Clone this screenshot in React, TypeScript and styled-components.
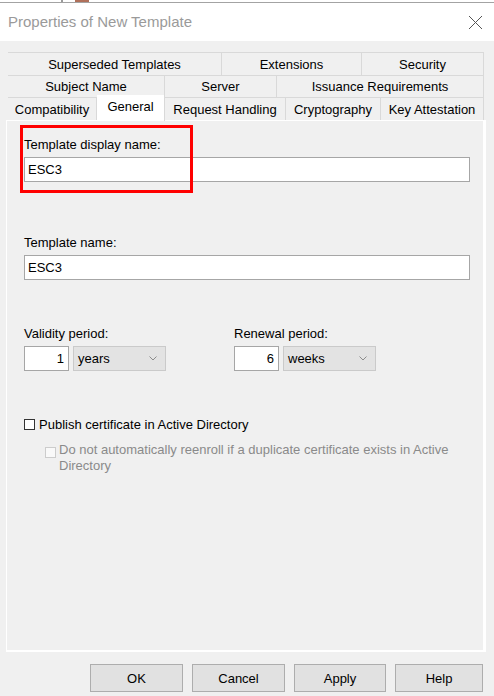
import React from "react";
import styled, { createGlobalStyle, css } from "styled-components";

const GlobalStyle = createGlobalStyle`
	html, body {
		margin: 0;
		padding: 0;
		background: #ffffff;
		overflow: hidden;
	}
`;

const FONT = `"Liberation Sans", Arial, sans-serif`;

const Window = styled.div`
	width: 494px;
	height: 696px;
	display: flex;
	flex-direction: column;
	background: #f0f0f0;
	font-family: ${FONT};
	font-size: 13px;
	color: #000;
`;

// sliver of whatever sits behind the dialog
const BackdropStrip = styled.div`
	height: 2px;
	background: #ffffff;
	border-bottom: 1px solid #a3a3a3;
	padding-left: 61px;
	display: flex;
	overflow: hidden;
`;

const TitleBar = styled.div`
	height: 38px;
	background: #ffffff;
	display: flex;
	align-items: center;
	justify-content: space-between;
	padding: 0 11px 0 8px;
`;

const Title = styled.span`
	font-size: 15px;
	line-height: 20px;
	color: #9a9a9a;
`;

const CloseButton = styled.button`
	width: 15px;
	height: 15px;
	padding: 0;
	border: none;
	background: transparent;
	display: flex;
`;

const Body = styled.div`
	flex: 1;
	display: flex;
	flex-direction: column;
	padding: 11px 8px 0 6px;
`;

const TabStrip = styled.div`
	margin-left: 2px;
	width: 476px;
	display: flex;
	flex-direction: column;
`;

const TabRow = styled.div<{ h: number }>`
	display: flex;
	height: ${({ h }) => h}px;
	box-sizing: border-box;
	border-top: 1px solid #d9d9d9;
`;

const Tab = styled.div<{ w: number; selected?: boolean }>`
	flex: 0 0 ${({ w }) => w}px;
	box-sizing: border-box;
	border-right: 1px solid #d9d9d9;
	display: flex;
	align-items: center;
	justify-content: center;
	white-space: nowrap;
	background: #f0f0f0;

	:first-child {
		border-left: 1px solid #d9d9d9;
	}

	${({ selected }) =>
		selected &&
		css`
			position: relative;
			z-index: 1;
			background: #ffffff;
			margin-top: -3px;
			height: calc(100% + 4px);
			padding-bottom: 3px;
			box-sizing: border-box;
		`}
`;

const Panel = styled.div`
	position: relative;
	width: 480px;
	height: 532px;
	box-sizing: border-box;
	border-style: solid;
	border-color: #ffffff;
	border-width: 1px 3px 2px 1px;
	background: #f0f0f0;
	padding: 16px 0 0 17px;
`;

const Highlight = styled.div`
	position: absolute;
	left: 13px;
	top: 4px;
	width: 173px;
	height: 68px;
	box-sizing: border-box;
	border: 3px solid #ff0000;
	pointer-events: none;
`;

const Field = styled.div<{ gap?: number }>`
	margin-top: ${({ gap }) => gap ?? 0}px;
	display: flex;
	flex-direction: column;
`;

const FieldLabel = styled.label`
	line-height: 15px;
	margin-bottom: 5px;
`;

const TextBox = styled.input`
	width: 446px;
	height: 25px;
	box-sizing: border-box;
	border: 1px solid #a6a6a6;
	background: #ffffff;
	padding: 0 3px;
	font-family: ${FONT};
	font-size: 13px;
	color: #000;
	outline: none;
`;

const PeriodRow = styled.div`
	margin-top: 46px;
	display: flex;
`;

const PeriodGroup = styled.div`
	width: 210px;
	display: flex;
	flex-direction: column;
`;

const PeriodControls = styled.div`
	display: flex;
	gap: 4px;
`;

const NumberBox = styled(TextBox)`
	width: 45px;
	text-align: right;
	padding-right: 4px;
`;

const Select = styled.div`
	width: 93px;
	height: 25px;
	box-sizing: border-box;
	border: 1px solid #cacaca;
	background: #e3e3e3;
	display: flex;
	align-items: center;
	justify-content: space-between;
	padding: 0 8px 0 4px;
`;

const CheckRow = styled.div<{ disabled?: boolean }>`
	display: flex;
	align-items: ${({ disabled }) => (disabled ? "flex-start" : "center")};
	gap: ${({ disabled }) => (disabled ? 3 : 4)}px;
	margin-top: ${({ disabled }) => (disabled ? 10 : 46)}px;
	padding-left: ${({ disabled }) => (disabled ? 21 : 0)}px;
	width: ${({ disabled }) => (disabled ? 425 : 446)}px;
	color: ${({ disabled }) => (disabled ? "#8a8a8a" : "#000")};
	line-height: ${({ disabled }) => (disabled ? 16 : 15)}px;
`;

const CheckBox = styled.span<{ disabled?: boolean }>`
	flex: 0 0 11px;
	height: 11px;
	box-sizing: border-box;
	border: 1px solid ${({ disabled }) => (disabled ? "#cccccc" : "#333333")};
	background: ${({ disabled }) => (disabled ? "#f9f9f9" : "#ffffff")};
	margin-top: ${({ disabled }) => (disabled ? 5 : 0)}px;
`;

const ButtonRow = styled.div`
	margin-top: 12px;
	display: flex;
	justify-content: flex-end;
	gap: 9px;
	padding-right: 3px;
`;

const Button = styled.button<{ w: number }>`
	width: ${({ w }) => w}px;
	height: 28px;
	box-sizing: border-box;
	border: 1px solid #adadad;
	background: #e1e1e1;
	font-family: ${FONT};
	font-size: 13px;
	color: #000;
	padding: 0;
`;

const TAB_ROWS: { h: number; tabs: { label: string; w: number; selected?: boolean }[] }[] = [
	{
		h: 23,
		tabs: [
			{ label: "Superseded Templates", w: 214 },
			{ label: "Extensions", w: 140 },
			{ label: "Security", w: 122 },
		],
	},
	{
		h: 22,
		tabs: [
			{ label: "Subject Name", w: 157 },
			{ label: "Server", w: 112 },
			{ label: "Issuance Requirements", w: 207 },
		],
	},
	{
		h: 23,
		tabs: [
			{ label: "Compatibility", w: 89 },
			{ label: "General", w: 68, selected: true },
			{ label: "Request Handling", w: 121 },
			{ label: "Cryptography", w: 95 },
			{ label: "Key Attestation", w: 103 },
		],
	},
];

const BUTTONS = [
	{ label: "OK", w: 93 },
	{ label: "Cancel", w: 93 },
	{ label: "Apply", w: 92 },
	{ label: "Help", w: 88 },
];

function Chevron() {
	return (
		<svg width="8" height="5" viewBox="0 0 8 5">
			<path d="M0.5 0.5 L4 4 L7.5 0.5" fill="none" stroke="#8c8c8c" strokeWidth="1" />
		</svg>
	);
}

function Period({ label, value, unit }: { label: string; value: string; unit: string }) {
	return (
		<PeriodGroup>
			<FieldLabel>{label}</FieldLabel>
			<PeriodControls>
				<NumberBox readOnly value={value} />
				<Select>
					<span>{unit}</span>
					<Chevron />
				</Select>
			</PeriodControls>
		</PeriodGroup>
	);
}

export default function App() {
	return (
		<>
			<GlobalStyle />
			<Window>
				<BackdropStrip>
					<svg width="30" height="2" viewBox="0 0 30 2">
						<rect x="0" y="0" width="2" height="2" fill="#9a9a9a" />
						<rect x="14" y="0" width="14" height="2" fill="#b0705a" />
					</svg>
				</BackdropStrip>
				<TitleBar>
					<Title>Properties of New Template</Title>
					<CloseButton aria-label="Close">
						<svg width="15" height="15" viewBox="0 0 15 15">
							<path d="M1 1 L14 14 M14 1 L1 14" stroke="#555" strokeWidth="1" fill="none" />
						</svg>
					</CloseButton>
				</TitleBar>
				<Body>
					<TabStrip>
						{TAB_ROWS.map((row, i) => (
							<TabRow key={i} h={row.h}>
								{row.tabs.map((t) => (
									<Tab key={t.label} w={t.w} selected={t.selected}>
										{t.label}
									</Tab>
								))}
							</TabRow>
						))}
					</TabStrip>
					<Panel>
						<Field>
							<FieldLabel>Template display name:</FieldLabel>
							<TextBox readOnly value="ESC3" />
						</Field>
						<Field gap={53}>
							<FieldLabel>Template name:</FieldLabel>
							<TextBox readOnly value="ESC3" />
						</Field>
						<PeriodRow>
							<Period label="Validity period:" value="1" unit="years" />
							<Period label="Renewal period:" value="6" unit="weeks" />
						</PeriodRow>
						<CheckRow>
							<CheckBox />
							<span>Publish certificate in Active Directory</span>
						</CheckRow>
						<CheckRow disabled>
							<CheckBox disabled />
							<span>Do not automatically reenroll if a duplicate certificate exists in Active Directory</span>
						</CheckRow>
						<Highlight />
					</Panel>
					<ButtonRow>
						{BUTTONS.map((b) => (
							<Button key={b.label} w={b.w}>
								{b.label}
							</Button>
						))}
					</ButtonRow>
				</Body>
			</Window>
		</>
	);
}
